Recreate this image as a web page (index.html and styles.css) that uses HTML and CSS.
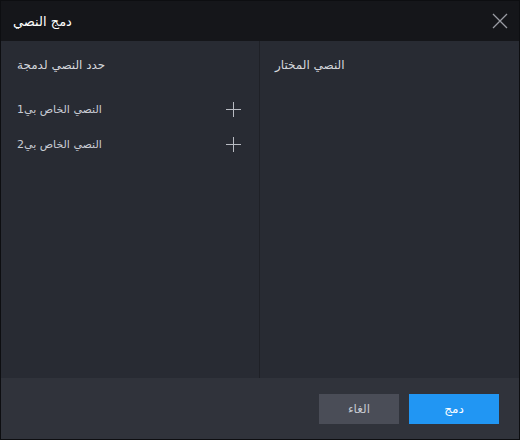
FILE: index.html
```html
<!DOCTYPE html>
<html>
<head>
<meta charset="utf-8">
<link rel="stylesheet" href="styles.css">
</head>
<body>
<div class="dialog">
  <header class="header">
    <span class="title">دمج النصي</span>
    <span class="close">
      <svg width="16" height="16" viewBox="0 0 16 16"><path d="M1 1L15 15M15 1L1 15" stroke="#9a9ca3" stroke-width="1.3" fill="none"/></svg>
    </span>
  </header>
  <main class="body">
    <section class="panel left">
      <div class="heading">حدد النصي لدمجة</div>
      <ul class="list">
        <li class="item"><span>النصي الخاص بي1</span><svg class="plus" width="15" height="15" viewBox="0 0 15 15"><path d="M7.5 0V15M0 7.5H15" stroke="#b8bbc2" stroke-width="1"/></svg></li>
        <li class="item"><span>النصي الخاص بي2</span><svg class="plus" width="15" height="15" viewBox="0 0 15 15"><path d="M7.5 0V15M0 7.5H15" stroke="#b8bbc2" stroke-width="1"/></svg></li>
      </ul>
    </section>
    <section class="panel right">
      <div class="heading">النصي المختار</div>
    </section>
  </main>
  <footer class="footer">
    <button class="btn cancel">الغاء</button>
    <button class="btn primary">دمج</button>
  </footer>
</div>
</body>
</html>
```
FILE: styles.css
```css
html, body { margin: 0; padding: 0; background: #0d0e11; }
body { font-family: "DejaVu Sans", sans-serif; }
.dialog {
  width: 518px; height: 438px;
  border: 1px solid #0d0e11;
  display: flex; flex-direction: column;
  background: #282b33;
}
.header {
  height: 40px; flex: none;
  background: #15161a;
  display: flex; align-items: center; justify-content: space-between;
  padding: 0 12px 0 12px;
  box-sizing: border-box;
}
.title { color: #ffffff; font-size: 13px; }
.close { display: flex; width: 16px; height: 16px; margin-right: -1px; }
.body { flex: 1; display: flex; }
.panel { flex: 1; box-sizing: border-box; }
.left { border-right: 1px solid #1f2127; width: 259px; flex: none; padding: 16px 18px 0 16px; }
.right { padding: 16px 15px 0 15px; }
.heading { color: #d5d7dc; font-size: 12px; line-height: 16px; }
.list { list-style: none; margin: 28px 0 0 0; padding: 0; }
.item {
  display: flex; align-items: center; justify-content: space-between;
  color: #c9ccd3; font-size: 11px; height: 16px; margin-bottom: 19px;
}
.plus { display: block; }
.footer {
  height: 61px; flex: none;
  background: #30333b;
  display: flex; justify-content: flex-end; align-items: flex-start;
  padding: 16px 20px 0 0; box-sizing: border-box; gap: 10px;
}
.btn {
  height: 30px; border: none; font-family: inherit; font-size: 12px; padding: 0;
  color: #ffffff;
}
.cancel { width: 80px; background: #4a4d57; color: #c5c8cf; }
.primary { width: 90px; background: #2196f3; }
```
